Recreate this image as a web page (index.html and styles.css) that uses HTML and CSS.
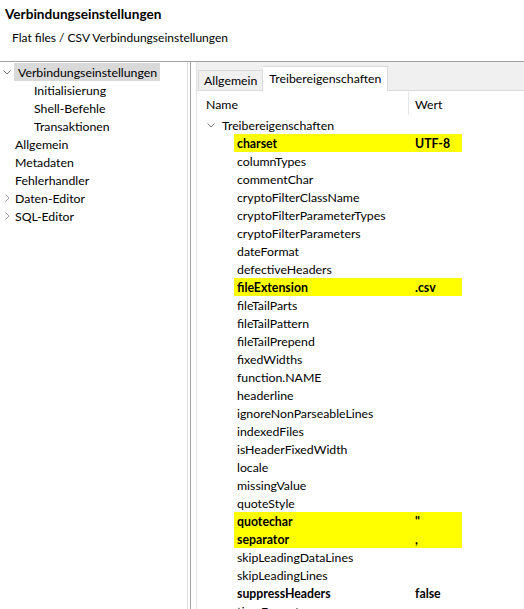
FILE: index.html
```html
<!DOCTYPE html>
<html lang="de">
<head>
<meta charset="utf-8">
<title>Verbindungseinstellungen</title>
<link rel="stylesheet" href="styles.css">
</head>
<body>
<div class="header">
  <div class="title">Verbindungseinstellungen</div>
  <div class="subtitle">Flat files / CSV Verbindungseinstellungen</div>
</div>
<div class="main">
  <div class="nav">
    <div class="nrow"><span class="twisty"><svg width="8" height="8" viewBox="0 0 8 8"><polyline points="0.5,2.5 4,6 7.5,2.5" fill="none" stroke="#7a7a7a" stroke-width="1"/></svg></span><span class="nlabel sel">Verbindungseinstellungen</span></div>
    <div class="nrow child"><span class="nlabel">Initialisierung</span></div>
    <div class="nrow child"><span class="nlabel">Shell-Befehle</span></div>
    <div class="nrow child"><span class="nlabel">Transaktionen</span></div>
    <div class="nrow"><span class="twisty"></span><span class="nlabel">Allgemein</span></div>
    <div class="nrow"><span class="twisty"></span><span class="nlabel">Metadaten</span></div>
    <div class="nrow"><span class="twisty"></span><span class="nlabel">Fehlerhandler</span></div>
    <div class="nrow"><span class="twisty"><svg width="8" height="8" viewBox="0 0 8 8"><polyline points="2.5,0.5 6,4 2.5,7.5" fill="none" stroke="#a0a0a0" stroke-width="1"/></svg></span><span class="nlabel">Daten-Editor</span></div>
    <div class="nrow"><span class="twisty"><svg width="8" height="8" viewBox="0 0 8 8"><polyline points="2.5,0.5 6,4 2.5,7.5" fill="none" stroke="#a0a0a0" stroke-width="1"/></svg></span><span class="nlabel">SQL-Editor</span></div>
  </div>
  <div class="sash"></div>
  <div class="pane">
    <div class="folder">
      <div class="tabbar">
        <div class="tab">Allgemein</div>
        <div class="tab active">Treibereigenschaften</div>
      </div>
      <div class="table">
        <div class="thead">
          <div class="th thname">Name</div>
          <div class="th thwert">Wert</div>
        </div>
        <div class="group"><span class="gtwisty"><svg width="8" height="8" viewBox="0 0 8 8"><polyline points="0.5,2.5 4,6 7.5,2.5" fill="none" stroke="#7a7a7a" stroke-width="1"/></svg></span><span class="gtext">Treibereigenschaften</span></div>
        <div class="row hl"><div class="cname">charset</div><div class="cval">UTF-8</div></div>
        <div class="row"><div class="cname">columnTypes</div><div class="cval"></div></div>
        <div class="row"><div class="cname">commentChar</div><div class="cval"></div></div>
        <div class="row"><div class="cname">cryptoFilterClassName</div><div class="cval"></div></div>
        <div class="row"><div class="cname">cryptoFilterParameterTypes</div><div class="cval"></div></div>
        <div class="row"><div class="cname">cryptoFilterParameters</div><div class="cval"></div></div>
        <div class="row"><div class="cname">dateFormat</div><div class="cval"></div></div>
        <div class="row"><div class="cname">defectiveHeaders</div><div class="cval"></div></div>
        <div class="row hl"><div class="cname">fileExtension</div><div class="cval">.csv</div></div>
        <div class="row"><div class="cname">fileTailParts</div><div class="cval"></div></div>
        <div class="row"><div class="cname">fileTailPattern</div><div class="cval"></div></div>
        <div class="row"><div class="cname">fileTailPrepend</div><div class="cval"></div></div>
        <div class="row"><div class="cname">fixedWidths</div><div class="cval"></div></div>
        <div class="row"><div class="cname">function.NAME</div><div class="cval"></div></div>
        <div class="row"><div class="cname">headerline</div><div class="cval"></div></div>
        <div class="row"><div class="cname">ignoreNonParseableLines</div><div class="cval"></div></div>
        <div class="row"><div class="cname">indexedFiles</div><div class="cval"></div></div>
        <div class="row"><div class="cname">isHeaderFixedWidth</div><div class="cval"></div></div>
        <div class="row"><div class="cname">locale</div><div class="cval"></div></div>
        <div class="row"><div class="cname">missingValue</div><div class="cval"></div></div>
        <div class="row"><div class="cname">quoteStyle</div><div class="cval"></div></div>
        <div class="row hl"><div class="cname">quotechar</div><div class="cval">"</div></div>
        <div class="row hl"><div class="cname">separator</div><div class="cval">,</div></div>
        <div class="row"><div class="cname">skipLeadingDataLines</div><div class="cval"></div></div>
        <div class="row"><div class="cname">skipLeadingLines</div><div class="cval"></div></div>
        <div class="row bold"><div class="cname">suppressHeaders</div><div class="cval">false</div></div>
        <div class="row"><div class="cname">timeFormat</div><div class="cval"></div></div>
      </div>
    </div>
  </div>
</div>
</body>
</html>
```
FILE: styles.css
```css
html, body {
  margin: 0;
  padding: 0;
  background: #ffffff;
  height: 609px;
  overflow: hidden;
}
body {
  font-family: Lato, "Noto Sans", sans-serif;
  font-size: 12.3px;
  color: #000;
}
.header {
  height: 61px;
  border-bottom: 1px solid #a0a0a0;
  box-sizing: content-box;
}
.title {
  font-weight: bold;
  font-size: 13.6px;
  padding: 5px 0 0 5px;
  height: 18px;
  line-height: 18px;
}
.subtitle {
  font-size: 12px;
  padding: 6px 0 0 12px;
  height: 18px;
  line-height: 18px;
}
.main {
  display: flex;
  height: 547px;
  overflow: hidden;
}
.nav {
  width: 187px;
  border-right: 1px solid #dcdcdc;
  padding-top: 1px;
  box-sizing: content-box;
  flex-shrink: 0;
}
.nrow {
  display: flex;
  align-items: stretch;
  height: 18px;
}
.twisty {
  width: 14px;
  height: 18px;
  display: flex;
  align-items: center;
  justify-content: flex-start;
  padding-left: 3px;
  box-sizing: border-box;
}
.nlabel {
  height: 18px;
  box-sizing: border-box;
  padding-top: 2px;
  line-height: 16px;
  padding-left: 1px;
  padding-right: 3px;
}
.nlabel.sel {
  background: #d9d9d9;
  padding-left: 4px;
}
.nrow.child .nlabel {
  padding-left: 34px;
}
.sash {
  width: 2px;
  flex-shrink: 0;
}
.pane {
  flex: 1;
  border-left: 1px solid #a0a0a0;
  padding-left: 5px;
  display: flex;
  min-width: 0;
}
.folder {
  flex: 1;
  border-left: 1px solid #e3e3e3;
  display: flex;
  flex-direction: column;
  min-height: 0;
}
.tabbar {
  flex-shrink: 0;
  height: 28px;
  background: #f0f0f0;
  border-bottom: 1px solid #d9d9d9;
  display: flex;
  align-items: flex-end;
  padding-left: 1px;
}
.tab {
  height: 20px;
  line-height: 20px;
  border: 1px solid #d9d9d9;
  border-bottom: none;
  padding: 0 5px 0 5px;
  background: #f0f0f0;
  box-sizing: border-box;
}
.tab.active {
  height: 25px;
  line-height: 23px;
  background: #fff;
  border-left: none;
  padding: 0 6px 0 6px;
  margin-bottom: -1px;
  position: relative;
}
.table {
  flex: 1;
  min-height: 0;
  overflow: hidden;
}
.thead {
  display: flex;
  height: 25px;
  align-items: stretch;
}
.th {
  display: flex;
  align-items: center;
  padding-top: 1px;
}
.thname {
  width: 212px;
  padding-left: 9px;
  box-sizing: border-box;
  border-right: 1px solid #e5e5e5;
  margin: 1px 0 1px 0;
}
.thwert {
  padding-left: 6px;
}
.group {
  height: 18px;
  display: flex;
  align-items: center;
  padding-left: 10px;
}
.gtext {
  padding-top: 2px;
  line-height: 16px;
}
.gtwisty {
  width: 15px;
  display: flex;
  align-items: center;
}
.row {
  display: flex;
  height: 18px;
  padding-left: 37px;
}
.cname, .cval {
  height: 18px;
  padding-top: 2px;
  line-height: 16px;
  box-sizing: border-box;
}
.cname {
  width: 175px;
  padding-left: 3px;
}
.cval {
  width: 53px;
  padding-left: 6px;
}
.row.hl .cname, .row.hl .cval {
  background: #ffff00;
  font-weight: bold;
}
.row.bold {
  font-weight: bold;
}
```
